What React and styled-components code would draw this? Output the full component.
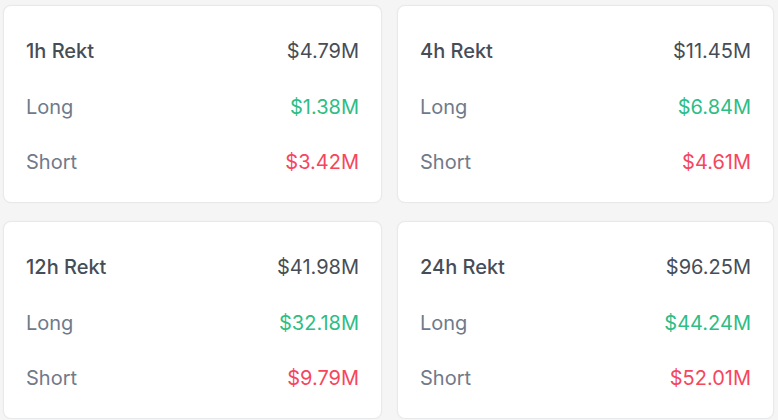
import React from 'react';
import styled, { createGlobalStyle } from 'styled-components';

const GlobalStyle = createGlobalStyle`
  html, body {
    margin: 0;
    padding: 0;
    background: #f5f5f5;
    overflow: hidden;
  }
`;

const Grid = styled.div`
  display: grid;
  grid-template-columns: 379px 377px;
  grid-auto-rows: 198px;
  column-gap: 15px;
  row-gap: 18px;
  padding: 5px 4px 0 3px;
  font-family: Inter, "Noto Sans", sans-serif;
`;

const Card = styled.div`
  display: flex;
  flex-direction: column;
  box-sizing: border-box;
  padding: 17px 22px 12px 22px;
  background: #ffffff;
  border: 1px solid #e8e9eb;
  border-radius: 8px;
  box-shadow: 0 0 2px rgba(0, 0, 0, 0.04);
`;

const Row = styled.div`
  display: flex;
  align-items: center;
  justify-content: space-between;
  height: 57px;
  font-size: 20px;
`;

const Label = styled.span`
  color: ${(p) => (p.head ? '#474d57' : '#707a8a')};
  font-weight: ${(p) => (p.head ? 500 : 400)};
`;

const Value = styled.span`
  color: ${(p) => p.color || '#474d57'};
`;

const stats = [
  { period: '1h', total: '$4.79M', long: '$1.38M', short: '$3.42M' },
  { period: '4h', total: '$11.45M', long: '$6.84M', short: '$4.61M' },
  { period: '12h', total: '$41.98M', long: '$32.18M', short: '$9.79M' },
  { period: '24h', total: '$96.25M', long: '$44.24M', short: '$52.01M' },
];

function RektCard({ item }) {
  return (
    <Card>
      <Row>
        <Label head>{item.period} Rekt</Label>
        <Value>{item.total}</Value>
      </Row>
      <Row>
        <Label>Long</Label>
        <Value color="#2ebd85">{item.long}</Value>
      </Row>
      <Row>
        <Label>Short</Label>
        <Value color="#f6465d">{item.short}</Value>
      </Row>
    </Card>
  );
}

export default function App() {
  return (
    <>
      <GlobalStyle />
      <Grid>
        {stats.map((s) => (
          <RektCard key={s.period} item={s} />
        ))}
      </Grid>
    </>
  );
}
